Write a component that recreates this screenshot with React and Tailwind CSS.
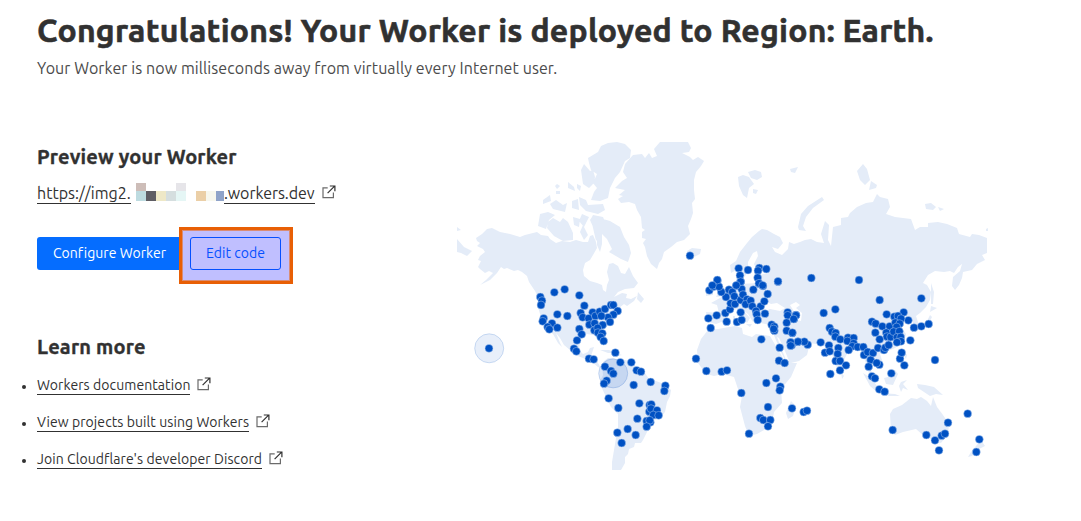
import React from "react";

const LAND = [
  // North America
  "M477 241L476 238L482 234L487 229L492 228L500 232L510 234L520 237L525 235L533 233L537 232L541 235L548 236L550 239L556 243L562 241L570 242L576 240L583 242L588 242L590 236L593 235L596 242L597 248L593 255L590 260L585 263L583 270L584 276L590 281L597 283L602 285L603 290L606 292L607 285L609 280L607 272L609 264L613 263L618 266L621 273L625 274L629 267L633 276L638 283L634 288L625 289L618 292L614 297L622 293L627 294L626 298L631 299L637 296L634 301L627 306L624 304L619 308L618 313L613 318L608 325L603 330L603 336L605 342L604 346L600 341L598 336L593 335L587 334L582 337L580 342L579 350L583 354L588 352L590 348L594 347L592 353L591 357L597 358L598 363L601 368L598 367L592 362L583 358L575 355L570 350L564 345L560 338L556 333L560 343L562 347L558 343L553 334L547 329L542 320L540 314L538 307L539 299L535 291L529 282L527 276L522 272L518 270L514 271L507 268L504 269L501 267L497 273L490 280L480 285L486 280L493 273L489 271L485 273L480 269L478 267L481 261L478 260L480 256L485 252L483 249L477 246L480 243Z",
  // South America
  "M602 365L604 361L608 358L613 358L618 360L625 360L632 362L637 368L645 373L649 379L656 381L664 384L671 390L670 396L667 402L665 412L660 418L653 421L649 428L643 440L641 443L635 443L634 447L629 449L628 454L625 457L625 463L621 470L612 470L612 462L614 450L616 438L618 427L618 414L611 407L606 397L601 386L600 381L603 375Z",
  // Greenland
  "M615 188L622 181L627 178L623 172L625 164L633 155L642 154L645 158L649 153L652 158L657 156L654 149L660 142H688L691 148L689 152L682 153L690 157L693 160L698 157L704 161L701 166L696 172L694 180L694 190L695 199L692 203L693 213L691 219L688 226L690 234L684 240L677 242L671 247L664 252L662 259L659 263L657 269L651 264L647 256L645 247L643 243L646 239L642 238L642 232L645 230L642 228L641 217L637 210L635 204L629 202L621 203L618 199L623 196L619 195L625 190Z",
  // Eurasia
  "M731 273L730 265L736 261L740 252L747 243L752 237L759 231L762 229L767 230L774 234L780 237L783 243L778 249L772 247L775 252L782 255L788 249L789 242L794 244L800 242L805 240L811 239L817 242L824 243L821 234L825 221L829 225L828 240L831 246L833 227L841 225V218L848 217L850 213L857 207L866 203L873 202L877 194L880 197L888 199L890 207L886 214L895 217L903 218L911 219L915 230L920 227L928 227L928 223L938 222L947 224L957 228L959 234L970 237L972 234L979 235L987 238L987 253L982 255L985 260L977 264L972 270L963 272L962 278L959 285L955 290L952 286L953 277L960 271L962 264L958 267L954 273L950 271L944 272L935 271L928 275L923 283L927 285L931 292L930 300L926 307L920 313L916 316L919 325L915 327L911 319L905 316L900 319L900 325L906 334L904 341L895 348L888 351L880 354L883 363L879 369L871 361L871 370L876 382L870 377L866 363L861 351L855 347L848 352L845 358L841 372L837 368L832 354L823 345L809 343L798 337L797 343L803 345L809 347L807 355L799 361L787 364L781 352L773 333L770 325L761 323L757 315L752 309L757 319L753 322L748 314L742 309L750 318L747 323L738 309L731 310L724 321L716 324L708 322L706 312L719 313L717 305L711 303L720 298L730 291L736 286V277L740 277L741 284L757 283L759 275L768 273L757 270L754 264L758 256L757 251L753 253L748 262L748 272L743 279L738 269Z",
  // Africa
  "M708 330L718 329L735 326L742 328L743 334L752 337L756 334L770 336L777 348L786 363L797 363L791 377L781 389L782 403L774 412L772 423L764 430L757 434L749 436L745 426L740 407L742 396L738 389L734 377L723 374L714 376L706 374L698 363L697 350L701 339Z",
  // Australia
  "M890 414L893 409L902 405L911 398L917 399L921 397L927 401L931 406L933 397L937 407L943 415L949 424L948 434L941 443L932 441L928 435L923 435L916 429L903 432L895 435L891 431Z",
  // Arctic archipelago
  "M588 158L598 152L601 146L608 143L617 142L625 144L631 150L630 158L625 161L620 172L615 178L610 188L608 198L600 201L591 200L594 192L597 188L593 183L597 174L591 170L589 163ZM581 170L584 164L590 171L593 170L595 177L594 183L589 188L583 184ZM591 219L593 215L603 217L606 224L604 232L596 241ZM590 220L592 217L603 219L610 221L620 227L624 237L629 245L631 253L628 262L621 259L609 252L612 249L607 239L602 234L602 244L600 252L597 245L597 236ZM540 214L548 212L555 215L549 220L546 229L538 226ZM548 222L553 218L560 222L563 218L568 222L573 233L573 240L563 241L554 236L547 228ZM550 204L556 200L563 205L567 203L565 212L553 209ZM543 200L550 195L551 201L543 204ZM568 182L574 187L575 191L568 188ZM577 184L581 186L580 191L577 188ZM572 201L578 199L579 210L572 208ZM579 197L586 200L588 205L603 204L605 210L598 214L586 211L580 205ZM582 214L589 217L584 227L579 221ZM573 217L580 219L579 227L574 225ZM583 225L588 235L584 240L580 232ZM557 184L560 186L557 189L555 186ZM556 191L560 191L560 194L556 194Z",
  "M457 239L464 247L472 251L467 256L461 253L457 252ZM457 227L461 230L457 231ZM638 292L644 299L641 303L637 299Z",
  // North Atlantic and Arctic islands
  "M738 177L743 175L749 177L754 184L749 188L747 198L743 195L739 186ZM748 172L755 170L761 172L762 177L757 180L751 178ZM753 189L758 190L756 194L753 193ZM687 251L692 248L701 249L700 254L692 258L687 255ZM790 169L798 167L795 173L791 172ZM798 227L801 214L808 206L822 197L824 200L813 208L806 217L803 226L806 231L799 230ZM857 171L863 164L867 169L870 180L865 185L860 180ZM871 181L877 185L876 188L869 190ZM925 204L931 203L936 207L933 210L926 209ZM938 207L944 209L940 211ZM986 229L988 228V231H986Z",
  "M715 278L721 278L722 285L727 291L724 296L716 297L719 291L716 287ZM706 289L713 287L713 295L706 296ZM733 316L735 316L735 323L733 323ZM746 324L752 324L750 327Z",
  // Pacific islands
  "M931 283L934 292L933 304L931 304ZM931 306L937 308L930 312ZM930 315L932 317L928 325L916 329L924 324L927 321ZM863 373L871 378L880 390L878 393L870 386ZM880 393L895 394L900 396L889 396ZM884 378L888 377L895 370L898 374L893 385L886 384ZM901 382L907 380L903 384L908 390L903 388L901 392L899 386ZM917 384L925 385L934 387L943 395L936 394L930 396L918 388ZM903 350L907 355L906 359L903 354ZM903 365L908 365L907 370ZM841 372L844 376L842 379ZM791 401L796 406L793 416L788 419L786 413ZM981 440L985 446L979 449L972 456L968 457L971 452ZM600 350L609 350L616 353L608 353ZM616 353L622 355L618 356Z",
];

const WATER = [
  "M761 306L766 301L771 304L777 303L785 308L780 311L770 309L763 312Z",
  "M790 305L796 302L800 305L796 308L802 313L801 321L797 320L795 313Z",
  "M777 337L786 360L789 361L785 351L779 338Z",
];

// Each group holds an origin and points measured in thirds of a pixel from it.
const GROUPS = [
  { o: [450, 280], p: [117,205, 271,51, 276,62, 273,75, 313,37, 344,28, 388,46, 403,77, 322,103, 352,108, 281,115, 278,124, 306,130, 293,141, 298,148, 322,143, 388,147, 395,163, 381,181, 372,206, 379,214, 392,99, 398,112, 428,97, 416,115, 436,108, 449,95, 465,87, 483,75, 490,75, 503,93, 490,104, 474,112, 454,108, 480,126, 418,134, 434,130, 458,135, 433,151, 443,144, 444,158, 457,160, 452,171, 461,183, 417,236, 431,238, 496,218, 511,247, 544,247, 465,260, 483,273, 490,281, 470,302, 462,311, 560,271, 573,275, 551,315, 476,355, 505,384, 568,370, 562,416, 533,447, 502,458, 557,465, 515,489] },
  { o: [600, 280], p: [152,306, 196,317, 193,333, 149,375, 154,373, 148,395, 153,386, 171,391, 160,405, 176,406, 140,423, 151,427, 149,421, 140,440, 288,236, 319,273, 365,275, 381,271, 332,144, 325,115, 350,106, 376,99, 380,125, 411,126, 425,120, 422,97, 390,88, 392,70, 405,72, 378,51, 364,36, 328,31, 340,20, 352,3, 357,20, 387,29, 397,36, 409,17, 422,5, 425,27, 403,49, 422,60, 429,44, 441,58, 437,73, 452,62, 457,79, 482,79, 493,64, 503,42, 460,29, 477,11, 489,18, 468,93, 470,103, 495,101, 473,120, 515,134, 523,140, 523,152, 521,147, 563,97, 563,106, 588,105, 582,117, 560,128, 560,152, 577,159, 572,187, 594,185, 575,196, 484,178, 539,203, 537,242, 554,249, 528,295, 499,309, 541,320, 539,331, 424,339, 504,381, 576,385, 481,414, 490,420, 511,420, 504,439, 447,461, 534,5] },
  { o: [600, 135], p: [270,362, 416,400, 444,405, 478,399, 474,407, 499,402, 420,421, 422,440, 473,428, 477,445, 488,451, 534,439, 352,435, 337,451, 409,451, 634,429, 777,435] },
  { o: [790, 280], p: [18,106, 11,117, 101,99, 136,88, 269,60, 394,55, 119,144, 126,155, 137,159, 136,170, 151,178, 174,173, 191,174, 172,183, 191,190, 187,199, 203,201, 176,210, 145,204, 143,222, 92,187, 117,196, 105,218, 119,214, 53,194, 43,185, 24,185, 2,187, 7,158, 2,197, 137,243, 150,243, 168,256, 150,271, 121,282, 220,201, 222,225, 233,216, 249,219, 242,240, 236,260, 268,254, 260,249, 264,204, 282,210, 286,203, 296,195, 246,289, 255,295, 268,328, 284,335, 304,280, 343,256, 330,236, 335,218, 435,240, 361,181, 372,143, 394,139, 416,132, 355,121, 341,97, 290,103, 313,110, 324,108, 333,116, 246,125, 257,131, 277,139, 256,158, 269,178, 299,139, 289,158, 291,170, 302,171, 316,128, 329,131, 320,141, 311,155, 328,154, 321,172, 332,171, 333,184, 321,187, 533,401, 474,428, 308,450, 409,465, 435,481, 455,467, 465,461, 447,511, 568,478, 559,516, 41,396, 51,392] },
];

const DOTS = GROUPS.flatMap(({ o, p }) => {
  const out = [];
  for (let i = 0; i < p.length; i += 2) out.push([o[0] + p[i] / 3, o[1] + p[i + 1] / 3]);
  return out;
});

const STAMPS = [[120, 62], [575, 54], [813, 82], [163, 180], [613, 155], [858, 198], [10, 250], [440, 235], [658, 278], [8, 372], [453, 350], [700, 397], [255, 415], [498, 470], [930, 445]];

function WorldMap() {
  return (
    <svg className="block h-[328px] w-[531px] shrink-0" viewBox="457 142 531 328" aria-label="World map">
      <g fill="#e4ecf8">{LAND.map((d, i) => <path key={i} d={d} />)}</g>
      <g fill="#ffffff">{WATER.map((d, i) => <path key={i} d={d} />)}</g>
      <g fill="#0051c3" fillOpacity=".09" stroke="#0051c3" strokeOpacity=".18">
        <circle cx="489.2" cy="348.3" r="14.5" />
        <circle cx="613.2" cy="373.4" r="14.5" />
      </g>
      <circle cx="613.2" cy="373.4" r="14.5" fill="#0051c3" fillOpacity=".04" />
      <g fill="#0051c3" stroke="#a9c6ef" strokeWidth=".5">
        {DOTS.map(([x, y], i) => <circle key={i} cx={x} cy={y} r="3.95" />)}
      </g>
    </svg>
  );
}

function ExternalIcon({ className }) {
  return (
    <svg className={`h-[14px] w-[14px] shrink-0 ${className}`} viewBox="0 0 14 14" fill="none">
      <path d="M5.7 2.8H1V12.6H11.4V7.6" stroke="#6b6b6b" strokeWidth="1.2" />
      <path d="M5.6 8.2L12.6 1.1M7.8 1H12.9V6.2" stroke="#313131" strokeWidth="1.2" />
    </svg>
  );
}

function DocLink({ children, className }) {
  return (
    <li className="relative flex h-[37px] items-start">
      <span className="absolute -left-[15px] top-[10px] h-1 w-1 rounded-full bg-[#313131]" />
      <a className={`h-[20px] shrink-0 whitespace-nowrap border-b border-[#313131] text-sm leading-5 tracking-[0.08px] ${className}`}>{children}</a>
      <ExternalIcon className="ml-[7px] mt-[2px]" />
    </li>
  );
}

function Redaction() {
  return (
    <span className="grid h-[18px] w-[93px] shrink-0 grid-cols-[5px_10px_10px_10px_10px_10px_10px_10px_10px_8px] grid-rows-[8px_10px]">
      <i /><i className="bg-[#cdbdb8]" /><i /><i /><i /><i className="bg-[#e6e5e9]" /><i /><i /><i /><i />
      <i /><i className="bg-[#bddbe0]" /><i className="bg-[#5e5d64]" /><i className="bg-[#eee8c7]" /><i className="bg-[#d5dedf]" /><i className="bg-[#e5f6f5]" /><i /><i className="bg-[#ebcfa7]" /><i className="bg-[#f7f7ee]" /><i className="bg-[#8fa3c9]" />
    </span>
  );
}

export default function App() {
  return (
    <main className="relative h-[521px] w-[1081px] overflow-hidden bg-white pl-[37px] pt-[9px] font-['Ubuntu','Noto_Sans',sans-serif] text-[#313131]">
      <h1 className="h-[42px] whitespace-nowrap text-[32px] font-bold leading-[42px] tracking-[0.24px] [-webkit-text-stroke:0.6px_#313131]">Congratulations! Your Worker is deployed to Region: Earth.</h1>
      <p className="mt-[5px] h-6 whitespace-nowrap text-base leading-6 tracking-[0.09px] text-[#4b4b4b]">Your Worker is now milliseconds away from virtually every Internet user.</p>
      <div className="mt-[62px] flex">
        <section className="w-[420px] shrink-0">
          <h2 className="h-[30px] whitespace-nowrap text-xl font-bold leading-[30px] tracking-[0.17px] [-webkit-text-stroke:0.35px_#313131]">Preview your Worker</h2>
          <div className="mt-[9px] flex h-6 items-start">
            <span className="h-[23px] w-[94px] whitespace-nowrap border-b border-[#313131] text-base leading-[24px]">https://img2.</span>
            <span className="mt-[2px]"><Redaction /></span>
            <span className="h-[23px] w-[91px] whitespace-nowrap border-b border-[#313131] text-base leading-[24px] tracking-[-0.06px]">.workers.dev</span>
            <ExternalIcon className="ml-[7px] mt-[4px]" />
          </div>
          <div className="relative mt-[32px] flex h-[33px]">
            <button className="h-[33px] w-[145px] whitespace-nowrap rounded-[3px] bg-[#056dff] pb-px pl-4 text-left text-sm leading-[31px] tracking-[0.04px] text-white">Configure Worker</button>
            <div className="absolute -top-[10px] left-[142px] h-[57px] w-[114px] border-[3px] border-[#e85f05] bg-[#c0bfff] p-[7px_8px] shadow-[inset_0_0_0_1px_#d88d75]">
              <button className="h-[33px] w-[91px] whitespace-nowrap rounded-[3px] border border-[#0550ff] pb-px text-sm leading-[28px] tracking-[0.05px] text-[#0550ff]">Edit code</button>
            </div>
          </div>
          <h2 className="mt-[62px] h-[30px] whitespace-nowrap text-xl font-bold leading-[30px] tracking-[0.17px] [-webkit-text-stroke:0.35px_#313131]">Learn more</h2>
          <ul className="mt-[13px]">
            <DocLink className="w-[153px]">Workers documentation</DocLink>
            <DocLink className="w-[212px]">View projects built using Workers</DocLink>
            <DocLink className="w-[225px]">Join Cloudflare's developer Discord</DocLink>
          </ul>
        </section>
        <WorldMap />
      </div>
      <svg className="pointer-events-none absolute inset-0 h-full w-full" viewBox="0 0 1081 521" aria-hidden="true">
        <g fill="#000000" fillOpacity=".018" fontSize="14" fontFamily="'Liberation Mono','Noto Sans CJK SC',monospace">
          {STAMPS.map(([x, y], i) => (
            <g key={i} transform={`translate(${x} ${y}) rotate(-17)`}>
              <text>林申-8193</text>
              <text y="18">shen.lin@xjsd.com</text>
              <text y="36">2023/08/25 17:38</text>
            </g>
          ))}
        </g>
      </svg>
    </main>
  );
}
